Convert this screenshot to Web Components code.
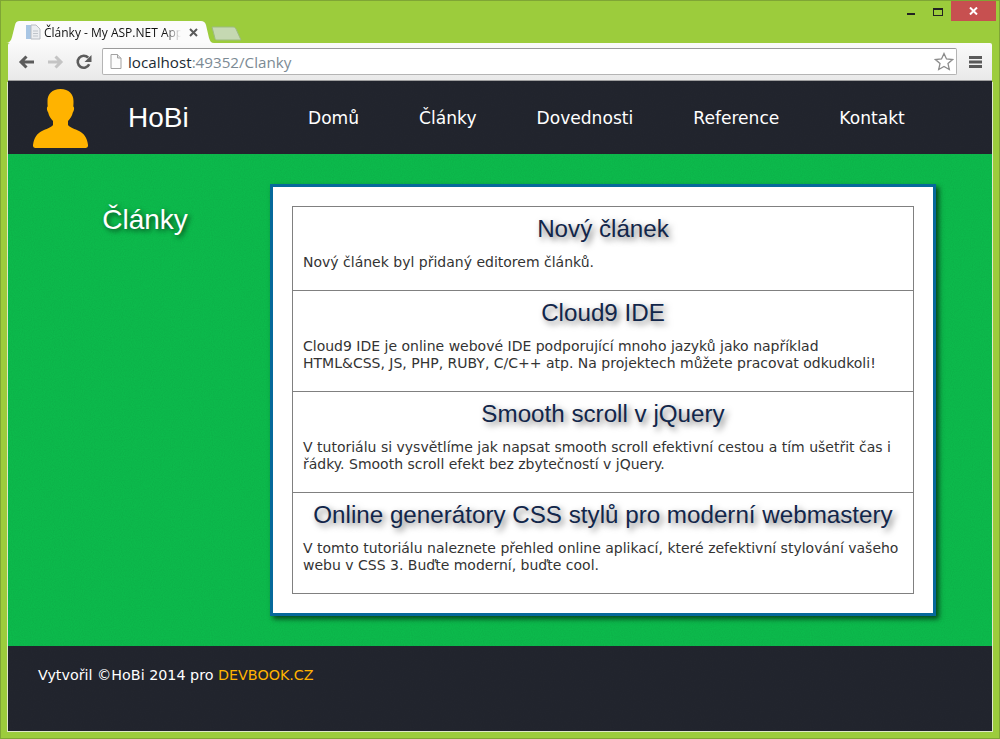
<!DOCTYPE html>
<html lang="cs">
<head>
<meta charset="utf-8">
<title>Články - My ASP.NET App</title>
<style>
  html, body { margin: 0; padding: 0; height: 739px; overflow: hidden; background: #9ccc3c; }
</style>
</head>
<body>
<browser-window>
  <site-header></site-header>
  <site-main heading="Články">
    <article-item title="Nový článek">Nový článek byl přidaný editorem článků.</article-item>
    <article-item title="Cloud9 IDE">Cloud9 IDE je online webové IDE podporující mnoho jazyků jako například HTML&amp;CSS, JS, PHP, RUBY, C/C++ atp. Na projektech můžete pracovat odkudkoli!</article-item>
    <article-item title="Smooth scroll v jQuery">V tutoriálu si vysvětlíme jak napsat smooth scroll efektivní cestou a tím ušetřit čas i řádky. Smooth scroll efekt bez zbytečností v jQuery.</article-item>
    <article-item title="Online generátory CSS stylů pro moderní webmastery">V tomto tutoriálu naleznete přehled online aplikací, které zefektivní stylování vašeho webu v CSS 3. Buďte moderní, buďte cool.</article-item>
  </site-main>
  <site-footer></site-footer>
</browser-window>
<script>
// subtle dark grain used on the header, main and footer backgrounds
const NOISE = `url("data:image/svg+xml,%3Csvg xmlns='http://www.w3.org/2000/svg' width='200' height='200'%3E%3Cfilter id='n'%3E%3CfeTurbulence type='fractalNoise' baseFrequency='0.9' numOctaves='2' stitchTiles='stitch'/%3E%3CfeColorMatrix values='0 0 0 0 0 0 0 0 0 0 0 0 0 0 0 0 0 0 0.5 -0.12'/%3E%3C/filter%3E%3Crect width='200' height='200' filter='url(%23n)' opacity='.15'/%3E%3C/svg%3E")`;

class BrowserWindow extends HTMLElement {
  constructor() {
    super();
    this.attachShadow({ mode: "open" });
    this.shadowRoot.innerHTML = `
      <style>
        :host {
          display: flex;
          flex-direction: column;
          height: 739px;
          box-sizing: border-box;
          background: #9ccc3c;
          border: 1px solid #7fa535;
          padding: 0 7px 7px;
          font-family: "Open Sans", sans-serif;
        }
        .titlebar {
          height: 42px;
          flex: none;
          display: flex;
          align-items: flex-end;
          margin: 0 -7px;
          position: relative;
        }
        .tab {
          position: relative;
          width: 210px;
          height: 22px;
          margin-left: 5px;
          display: flex;
          align-items: center;
          font-size: 12px;
          color: #111;
          flex: none;
        }
        .tab svg.shape { position: absolute; left: 0; top: 0; }
        .tab-icon { position: relative; margin-left: 19px; flex: none; }
        .tab-title {
          position: relative;
          margin-left: 3px;
          width: 137px;
          overflow: hidden;
          white-space: nowrap;
          -webkit-mask-image: linear-gradient(90deg, #000 88%, transparent);
          mask-image: linear-gradient(90deg, #000 88%, transparent);
        }
        .tab-close { position: relative; margin-left: 8px; flex: none; }
        .newtab { align-self: flex-end; margin: 0 0 2px -5px; flex: none; }
        .controls { position: absolute; right: 3px; top: 0; display: flex; }
        .ctl { position: relative; height: 20px; }
        .min { width: 8px; margin-right: 18px; }
        .min i { position: absolute; left: 0; top: 12px; width: 8px; height: 2px; background: #222; }
        .max { width: 10px; margin-right: 8px; }
        .max i { position: absolute; left: 0; top: 7px; width: 8px; height: 5px; border: 1px solid #222; border-top-width: 2px; }
        .close { width: 45px; background: #c75050; display: flex; align-items: center; justify-content: center; }
        .toolbar {
          flex: none;
          height: 38px;
          box-sizing: border-box;
          background: linear-gradient(#fafafa, #e9e9e9);
          border-bottom: 1px solid #a0a0a0;
          border-radius: 2px 2px 0 0;
          display: flex;
          align-items: center;
          padding-left: 10px;
        }
        .toolbar svg { flex: none; }
        .nav { margin-right: 12px; }
        .reload { margin-right: 10px; }
        .address {
          flex: none;
          width: 855px;
          height: 27px;
          box-sizing: border-box;
          background: #fff;
          border: 1px solid #b4b4b4;
          border-top-color: #9a9a9a;
          border-radius: 2px;
          display: flex;
          align-items: center;
          padding-left: 7px;
          font-size: 15.200px;
          color: #7c8a94;
        }
        .address b { font-weight: 400; color: #1c2a33; }
        .url { margin-left: 6px; flex: 1; }
        .menu { margin-left: 12px; }
        .content {
          flex: 1;
          display: flex;
          flex-direction: column;
          min-height: 0;
          box-shadow: -1px 1px 0 #dfe8c8, 1px 1px 0 #dfe8c8;
        }
      </style>
      <div class="titlebar">
        <div class="tab">
          <svg class="shape" width="210" height="22" viewBox="0 0 210 22">
            <path d="M0 22 C3 22 5 20 6 16 L9 4 C9.600 1.500 11 0 13.500 0 L195 0 C197.500 0 199 1 200 4 L203 17 C204 20 205 22 208 22 Z" fill="#fbfbfb"/>
          </svg>
          <svg class="tab-icon" width="16" height="16" viewBox="0 0 16 16">
            <path d="M1 1 H6 V15 H1 Z" fill="#a8c6e4"/>
            <path d="M6 1 H11 L15 5 V15 H6 Z" fill="#eceef1" stroke="#b8bcc2"/>
            <path d="M8 7 H13 M8 9.500 H13 M8 12 H13" stroke="#bfc4ca"/>
          </svg>
          <span class="tab-title">Články - My ASP.NET App</span>
          <svg class="tab-close" width="9" height="9" viewBox="0 0 9 9">
            <path d="M1 1 L8 8 M8 1 L1 8" stroke="#5a5a5a" stroke-width="2"/>
          </svg>
        </div>
        <svg class="newtab" width="32" height="15" viewBox="0 0 32 15">
          <path d="M1 1 H22 C23.500 1 24.300 1.600 25 3 L30 14 H6 C4.800 14 4.300 13.500 4 12.500 Z" fill="#c5d8b2" stroke="#9dbb80"/>
        </svg>
        <div class="controls">
          <div class="ctl min"><i></i></div>
          <div class="ctl max"><i></i></div>
          <div class="ctl close">
            <svg width="9" height="8" viewBox="0 0 9 8"><path d="M1 .5 L8 7.500 M8 .5 L1 7.500" stroke="#fff" stroke-width="2"/></svg>
          </div>
        </div>
      </div>
      <div class="toolbar">
        <svg class="nav" width="17" height="14" viewBox="0 0 17 14">
          <path d="M16 7 H4 M8.500 1.500 L3 7 L8.500 12.500" fill="none" stroke="#5c5c5c" stroke-width="3"/>
        </svg>
        <svg class="nav" width="17" height="14" viewBox="0 0 17 14">
          <path d="M1 7 H13 M8.500 1.500 L14 7 L8.500 12.500" fill="none" stroke="#c4c4c4" stroke-width="3"/>
        </svg>
        <svg class="reload" width="16" height="16" viewBox="0 0 16 16">
          <path d="M13.200 10.200 A6 6 0 1 1 12.200 3.700" fill="none" stroke="#5c5c5c" stroke-width="2.600"/>
          <path d="M15.500 1 V8 H8.500 Z" fill="#5c5c5c"/>
        </svg>
        <div class="address">
          <svg width="12" height="15" viewBox="0 0 12 15">
            <path d="M1 .5 H7.500 L11 4 V14.500 H1 Z" fill="#fcfcfc" stroke="#a2a2a2"/>
            <path d="M7.500 .5 V4 H11" fill="#e4e4e4" stroke="#a2a2a2"/>
          </svg>
          <span class="url"><b>localhost</b>:49352/Clanky</span>
          <svg width="20" height="19" viewBox="0 0 20 19" style="margin-right:2px">
            <path d="M10 1.500 L12.500 7 L18.500 7.600 L14 11.600 L15.300 17.500 L10 14.500 L4.700 17.500 L6 11.600 L1.500 7.600 L7.500 7 Z" fill="#fff" stroke="#8c8c8c" stroke-width="1.300"/>
          </svg>
        </div>
        <svg class="menu" width="13" height="12" viewBox="0 0 13 12">
          <path d="M0 0 H13 V3 H0 Z M0 4.500 H13 V7.500 H0 Z M0 9 H13 V12 H0 Z" fill="#5a5a5a"/>
        </svg>
      </div>
      <div class="content"><slot></slot></div>
    `;
  }
}

class SiteHeader extends HTMLElement {
  constructor() {
    super();
    this.attachShadow({ mode: "open" });
    const links = ["Domů", "Články", "Dovednosti", "Reference", "Kontakt"];
    this.shadowRoot.innerHTML = `
      <style>
        :host {
          display: flex;
          align-items: center;
          flex: none;
          height: 73px;
          background: #22252e ${NOISE};
          color: #fff;
        }
        svg { margin: 2px 0 0 25px; flex: none; }
        .brand {
          font: 28px "Liberation Sans", Arial, sans-serif;
          margin-left: 40px;
          width: 180px;
          flex: none;
        }
        nav { display: flex; gap: 60px; }
        nav a {
          color: #fff;
          text-decoration: none;
          font: 17.100px "DejaVu Sans", Verdana, sans-serif;
        }
      </style>
      <svg width="55" height="59" viewBox="0 0 55 59">
        <path d="M27.500 0 C36 0 40.500 5 40.500 12 C40.500 14 40.500 16 40.300 17.500 C41.500 18 41.300 21.500 39.800 23.500 C39.200 27 37 30 35 32 L35 36 C37 38.500 42 40 46 42 C51 44.500 54 48.500 55 56 C55.200 58 54 59 52.500 59 L2.500 59 C1 59 -.2 58 0 56 C1 48.500 4 44.500 9 42 C13 40 18 38.500 20 36 L20 32 C18 30 15.800 27 15.200 23.500 C13.700 21.500 13.500 18 14.700 17.500 C14.500 16 14.500 14 14.500 12 C14.500 5 19 0 27.500 0 Z" fill="#ffb300"/>
      </svg>
      <div class="brand">HoBi</div>
      <nav>${links.map((l) => `<a href="#">${l}</a>`).join("")}</nav>
    `;
  }
}

class SiteMain extends HTMLElement {
  constructor() {
    super();
    this.attachShadow({ mode: "open" });
    this.shadowRoot.innerHTML = `
      <style>
        :host {
          display: flex;
          align-items: flex-start;
          flex: none;
          height: 492px;
          box-sizing: border-box;
          background: #0cbb4c ${NOISE};
          padding-top: 30px;
        }
        h2 {
          flex: none;
          width: 262px;
          margin: 20px 0 0;
          padding-left: 12px;
          text-align: center;
          color: #fff;
          font: 400 28px "Liberation Sans", Arial, sans-serif;
          text-shadow: 2px 2px 5px rgba(0, 0, 0, .65);
          box-sizing: border-box;
        }
        .card {
          flex: none;
          width: 666px;
          height: 432px;
          box-sizing: border-box;
          background: #fff;
          border: 3px solid #06699b;
          box-shadow: 3px 3px 5px rgba(0, 0, 0, .6);
          padding: 19px;
        }
        .list { border: 1px solid #808080; display: flex; flex-direction: column; }
      </style>
      <h2></h2>
      <div class="card"><div class="list"><slot></slot></div></div>
    `;
    this.shadowRoot.querySelector("h2").textContent = this.getAttribute("heading");
  }
}

class ArticleItem extends HTMLElement {
  constructor() {
    super();
    this.attachShadow({ mode: "open" });
    this.shadowRoot.innerHTML = `
      <style>
        :host {
          display: block;
          padding: 7px 10px 19px;
          border-bottom: 1px solid #808080;
        }
        :host(:last-child) { border-bottom: 0; }
        h3 {
          margin: 0 0 11px;
          text-align: center;
          color: #12264a;
          font: 400 24.200px/29px "Liberation Sans", Arial, sans-serif;
          text-shadow: 3px 3px 6px rgba(0, 0, 0, .55);
          white-space: nowrap;
        }
        p {
          margin: 0;
          color: #333;
          font: 14px/17px "DejaVu Sans", Verdana, sans-serif;
        }
      </style>
      <h3></h3>
      <p><slot></slot></p>
    `;
    this.shadowRoot.querySelector("h3").textContent = this.getAttribute("title");
    this.removeAttribute("title");
  }
}

class SiteFooter extends HTMLElement {
  constructor() {
    super();
    this.attachShadow({ mode: "open" });
    this.shadowRoot.innerHTML = `
      <style>
        :host {
          display: block;
          flex: 1;
          background: #22252e ${NOISE};
          color: #fff;
          padding: 21px 30px 0;
          font: 14.300px/17px "DejaVu Sans", Verdana, sans-serif;
        }
        a { color: #ffb300; text-decoration: none; }
      </style>
      Vytvořil ©HoBi 2014 pro <a href="#">DEVBOOK.CZ</a>
    `;
  }
}

customElements.define("browser-window", BrowserWindow);
customElements.define("site-header", SiteHeader);
customElements.define("site-main", SiteMain);
customElements.define("article-item", ArticleItem);
customElements.define("site-footer", SiteFooter);
</script>
</body>
</html>
